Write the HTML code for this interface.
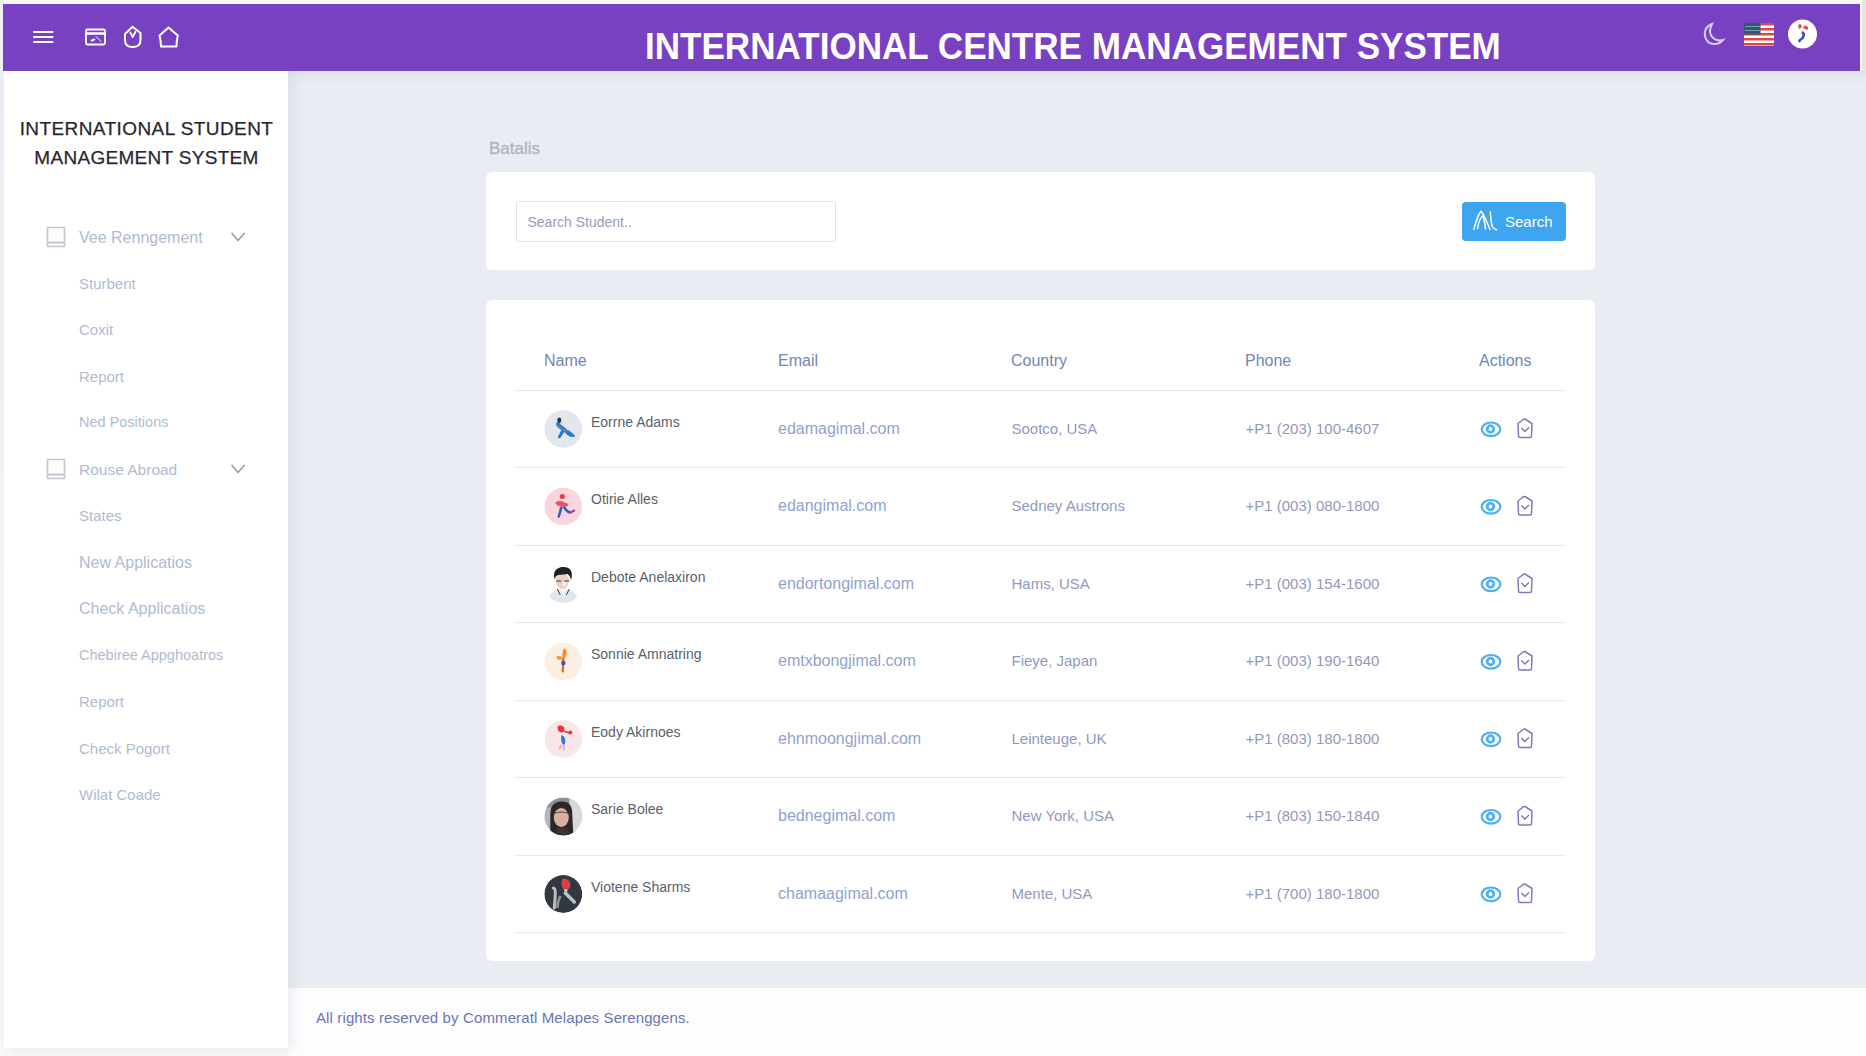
<!DOCTYPE html>
<html><head><meta charset="utf-8">
<style>
*{margin:0;padding:0;box-sizing:border-box}
html,body{width:1866px;height:1056px;overflow:hidden}
body{position:relative;background:#e9edf3;font-family:"Liberation Sans",sans-serif}
.abs{position:absolute}
#topstrip{left:0;top:0;width:1866px;height:4px;background:#f7f8fb}
#leftstrip{left:0;top:0;width:4px;height:1056px;background:linear-gradient(180deg,#eceff5 0,#eff1f6 300px,#f6f7fa 600px,#f8f9fb 100%)}
#rightstrip{left:1860px;top:0;width:6px;height:72px;background:linear-gradient(90deg,#fafbfc 0,#fafbfc 2px,#e3e6ea 2px)}
#header{left:3px;top:4px;width:1857px;height:67px;background:#7841c2}
#title{left:645px;top:27px;font-weight:bold;font-size:36px;line-height:40px;color:#fff;white-space:nowrap;transform-origin:0 0;transform:scaleX(0.974)}
#sidebar{left:4px;top:71px;width:284px;height:977px;background:#fff;box-shadow:4px 2px 12px rgba(130,140,160,0.16)}
#main{left:288px;top:71px;width:1578px;height:917px;background:linear-gradient(180deg,#dde1e7 0,#e4e8ee 5px,#e9edf3 14px,#e9edf3 100%)}
#footer{left:288px;top:988px;width:1578px;height:68px;background:#fdfdfe}
.sbt{left:0;width:293px;text-align:center;font-size:19px;line-height:22px;color:#2a2630;white-space:nowrap;-webkit-text-stroke:0.25px #2a2630}
.mi{left:79px;line-height:17px;color:#afbbd0;white-space:nowrap}
.card{background:#fff;border-radius:6px}
.th{font-size:16px;line-height:18px;color:#6f87b5;white-space:nowrap}
.nm{font-size:14px;line-height:16px;color:#5a5f6c;white-space:nowrap}
.em{font-size:16px;line-height:18px;color:#90a2cf;white-space:nowrap}
.co{font-size:15px;line-height:18px;color:#8f99c2;white-space:nowrap}
.ph{font-size:15px;line-height:18px;color:#9497bb;white-space:nowrap}
.hr{left:514px;width:1052px;height:1px;background:#e6e9ef}
svg{position:absolute;overflow:visible}
</style></head><body>
<div id="topstrip" class="abs"></div>
<div id="leftstrip" class="abs"></div>
<div id="rightstrip" class="abs"></div>
<div id="header" class="abs"></div>
<div id="title" class="abs">INTERNATIONAL CENTRE MANAGEMENT SYSTEM</div>
<svg style="left:0;top:0" width="1" height="1">
<g stroke="#fff" stroke-width="2" fill="none" stroke-linecap="round" stroke-linejoin="round">
<path d="M34,32 H52.5 M34,37 H52.5 M34,42 H52.5"/>
<rect x="86" y="29.5" width="19" height="15" rx="1.5" stroke-width="1.8"/>
<path d="M87,33.5 H104" stroke-width="2.5"/>
<path d="M96,36.5 L101,41.5" stroke-width="1"/>
</g>
<ellipse cx="93" cy="40" rx="2.5" ry="1.2" transform="rotate(-25 93 40)" fill="#fff"/>
<g stroke="#fff" stroke-width="2" fill="none" stroke-linecap="round" stroke-linejoin="round">
<path d="M125,34 L132.5,26.8 L140.5,33 L140.5,40 C140.5,45 137,47 132.5,47 C128,47 125,45 125,40 Z"/>
<path d="M130.3,32.5 L132.7,37 L135.5,31.8" stroke-width="1.8"/>
<path d="M168.5,27.5 L177.8,35.5 Q176.5,41 176.5,46.5 L161,46.5 Q161,41 159.5,35.5 Z"/>
</g>
<path d="M1712,24 C1706,26 1703,32 1706,39 C1709,45 1718,46 1723,40 C1716,42 1710,37 1710,31 C1710,28 1711,26 1712,24 Z" fill="none" stroke="#d9cdef" stroke-width="2"/>
<g>
<rect x="1744" y="23" width="30" height="23" fill="#fff"/>
<rect x="1744" y="23" width="30" height="2.5" fill="#e04848"/>
<rect x="1744" y="28" width="30" height="2.5" fill="#e04848"/>
<rect x="1744" y="33" width="30" height="2.5" fill="#e04848"/>
<rect x="1744" y="38" width="30" height="2.5" fill="#e04848"/>
<rect x="1744" y="43" width="30" height="2.5" fill="#e04848"/>
<rect x="1744" y="23" width="16.5" height="11.5" fill="#2f5b72"/>
<path d="M1745,26.5 H1760 M1745,30.5 H1760" stroke="#8fb0bd" stroke-width="0.8"/>
</g>
<circle cx="1802.5" cy="34" r="14.5" fill="#fff"/>
<path d="M1798,25 C1800,23 1803,25 1801,28 L1799,29 Z M1804,26 C1807,25 1810,28 1807,30 L1803,28 Z" fill="#e84a4a"/>
<path d="M1802,32 C1805,34 1804,38 1800,40 L1799,42" stroke="#2f50b8" stroke-width="2.5" fill="none"/>
</svg>
<div id="main" class="abs"></div>
<div class="abs" style="left:0;top:1047px;width:288px;height:9px;background:#f8f9fb"></div>
<div id="footer" class="abs"></div>
<div id="sidebar" class="abs"></div>
<div class="abs sbt" style="top:118px;letter-spacing:0.42px">INTERNATIONAL STUDENT</div>
<div class="abs sbt" style="top:147px;letter-spacing:0.3px">MANAGEMENT SYSTEM</div>
<div class="abs mi" style="top:229px;font-size:16px">Vee Renngement</div>
<div class="abs mi" style="top:275px;font-size:15px">Sturbent</div>
<div class="abs mi" style="top:321px;font-size:15px">Coxit</div>
<div class="abs mi" style="top:368px;font-size:15px">Report</div>
<div class="abs mi" style="top:414px;font-size:14.5px">Ned Positions</div>
<div class="abs mi" style="top:461px;font-size:15.5px">Rouse Abroad</div>
<div class="abs mi" style="top:507px;font-size:15px">States</div>
<div class="abs mi" style="top:554px;font-size:16px">New Applicatios</div>
<div class="abs mi" style="top:600px;font-size:16px">Check Applicatios</div>
<div class="abs mi" style="top:647px;font-size:14.5px">Chebiree Appghoatros</div>
<div class="abs mi" style="top:693px;font-size:15px">Report</div>
<div class="abs mi" style="top:740px;font-size:15px">Check Pogort</div>
<div class="abs mi" style="top:786px;font-size:15px">Wilat Coade</div>
<svg style="left:0;top:0" width="1" height="1"><rect x="47.5" y="227.5" width="17" height="19" rx="1" fill="none" stroke="#c0c6d0" stroke-width="1.7"/><path d="M48,242.5 H64" stroke="#c0c6d0" stroke-width="2"/><path d="M231.5,233 L238,240.5 L244.5,233" fill="none" stroke="#97a0b0" stroke-width="1.7"/><rect x="47.5" y="459.5" width="17" height="19" rx="1" fill="none" stroke="#c0c6d0" stroke-width="1.7"/><path d="M48,474.5 H64" stroke="#c0c6d0" stroke-width="2"/><path d="M231.5,465 L238,472.5 L244.5,465" fill="none" stroke="#97a0b0" stroke-width="1.7"/></svg>
<div class="abs" style="left:489px;top:139px;font-size:17px;line-height:19px;color:#aeb2bc;-webkit-text-stroke:0.3px #aeb2bc">Batalis</div>
<div class="abs card" style="left:486px;top:172px;width:1109px;height:98px"></div>
<div class="abs" style="left:515.5px;top:201px;width:320.5px;height:40.5px;border:1px solid #e1e4ea;border-radius:2px;background:#fff"></div>
<div class="abs" style="left:527.5px;top:214px;font-size:14px;line-height:17px;color:#9c9ab8">Search Student..</div>
<div class="abs" style="left:1462px;top:202px;width:103.5px;height:38.5px;background:#3ea6f1;border-radius:4px"></div>
<svg style="left:0;top:0" width="1" height="1"><path d="M1473.8,229.5 C1476,222 1478,213.5 1481,211.3 C1483.5,213.5 1487,222 1490,229.5 M1477.5,228.5 C1478.5,223 1480.5,217.5 1482.5,216 C1484,218.5 1485,224 1485.5,229 M1490.3,212 C1490.8,219 1491.3,224 1492.3,226.5 C1493.3,228.5 1494.8,229.5 1496.5,229.8" fill="none" stroke="#fff" stroke-width="1.5" stroke-linecap="round"/></svg>
<div class="abs" style="left:1505px;top:213px;font-size:15px;line-height:17px;color:#fff">Search</div>
<div class="abs card" style="left:486px;top:300px;width:1109px;height:661px"></div>
<div class="abs th" style="left:544px;top:351.5px">Name</div>
<div class="abs th" style="left:778px;top:351.5px">Email</div>
<div class="abs th" style="left:1011px;top:351.5px">Country</div>
<div class="abs th" style="left:1245px;top:351.5px">Phone</div>
<div class="abs th" style="left:1479px;top:351.5px">Actions</div>
<div class="abs hr" style="top:389.5px"></div>
<div class="abs nm" style="left:591px;top:413.5px">Eorrne Adams</div>
<div class="abs em" style="left:778px;top:419.5px">edamagimal.com</div>
<div class="abs co" style="left:1011.5px;top:419.5px">Sootco, USA</div>
<div class="abs ph" style="left:1245.5px;top:419.5px">+P1 (203) 100-4607</div>
<div class="abs hr" style="top:467.0px"></div>
<div class="abs nm" style="left:591px;top:491.0px">Otirie Alles</div>
<div class="abs em" style="left:778px;top:497.0px">edangimal.com</div>
<div class="abs co" style="left:1011.5px;top:497.0px">Sedney Austrons</div>
<div class="abs ph" style="left:1245.5px;top:497.0px">+P1 (003) 080-1800</div>
<div class="abs hr" style="top:544.5px"></div>
<div class="abs nm" style="left:591px;top:568.5px">Debote Anelaxiron</div>
<div class="abs em" style="left:778px;top:574.5px">endortongimal.com</div>
<div class="abs co" style="left:1011.5px;top:574.5px">Hams, USA</div>
<div class="abs ph" style="left:1245.5px;top:574.5px">+P1 (003) 154-1600</div>
<div class="abs hr" style="top:622.0px"></div>
<div class="abs nm" style="left:591px;top:646.0px">Sonnie Amnatring</div>
<div class="abs em" style="left:778px;top:652.0px">emtxbongjimal.com</div>
<div class="abs co" style="left:1011.5px;top:652.0px">Fieye, Japan</div>
<div class="abs ph" style="left:1245.5px;top:652.0px">+P1 (003) 190-1640</div>
<div class="abs hr" style="top:699.5px"></div>
<div class="abs nm" style="left:591px;top:723.5px">Eody Akirnoes</div>
<div class="abs em" style="left:778px;top:729.5px">ehnmoongjimal.com</div>
<div class="abs co" style="left:1011.5px;top:729.5px">Leinteuge, UK</div>
<div class="abs ph" style="left:1245.5px;top:729.5px">+P1 (803) 180-1800</div>
<div class="abs hr" style="top:777.0px"></div>
<div class="abs nm" style="left:591px;top:801.0px">Sarie Bolee</div>
<div class="abs em" style="left:778px;top:807.0px">bednegimal.com</div>
<div class="abs co" style="left:1011.5px;top:807.0px">New York, USA</div>
<div class="abs ph" style="left:1245.5px;top:807.0px">+P1 (803) 150-1840</div>
<div class="abs hr" style="top:854.5px"></div>
<div class="abs nm" style="left:591px;top:878.5px">Viotene Sharms</div>
<div class="abs em" style="left:778px;top:884.5px">chamaagimal.com</div>
<div class="abs co" style="left:1011.5px;top:884.5px">Mente, USA</div>
<div class="abs ph" style="left:1245.5px;top:884.5px">+P1 (700) 180-1800</div>
<div class="abs hr" style="top:932.0px"></div>
<svg style="left:0;top:0" width="1" height="1"><g transform="translate(563.3,429.0)"><clipPath id="c0"><circle r="19"/></clipPath><g clip-path="url(#c0)"><circle r="19" fill="#e2e7ed"/><path d="M-7,-6 C-5,-9 -2,-7 1,-3 L5,1 C8,3 10,5 12,7 C10,9 6,8 3,5 L1,3 L-3,9 C-4,10 -6,9 -5,7 L-2,1 C-5,-1 -8,-3 -7,-6 Z" fill="#2f78c4"/><path d="M-6,-4 C-4,-1 -1,1 2,2" stroke="#5aa0e0" stroke-width="1" fill="none"/><ellipse cx="-4" cy="-9" rx="2" ry="2.5" fill="#2b2f3a"/><path d="M-3,-6 L2,-2 C4,-1 5,0 4,1" stroke="#e9d8cf" stroke-width="2" fill="none"/></g></g><ellipse cx="1491" cy="429.3" rx="9.3" ry="6.8" fill="none" stroke="#4fb0ef" stroke-width="2.2"/><circle cx="1490.5" cy="429.0" r="3.3" fill="none" stroke="#4fb0ef" stroke-width="2.8"/><path d="M1518,423.5 L1522.5,420.0 C1523.5,418.5 1525.5,418.5 1526.5,420.0 L1532,423.5 L1531.5,436.0 C1531.5,437.3 1531,437.5 1530,437.5 L1520,437.5 C1519,437.5 1518.5,437.0 1518.5,436.0 Z" fill="none" stroke="#8079bd" stroke-width="1.5" stroke-linejoin="round"/><path d="M1521.5,428.0 L1524.8,431.5 L1529,427.5" fill="none" stroke="#7a74b0" stroke-width="1.4"/><g transform="translate(563.3,506.5)"><clipPath id="c1"><circle r="19"/></clipPath><g clip-path="url(#c1)"><circle r="19" fill="#f9d5de"/><circle cx="-1" cy="-10" r="2.6" fill="#e0424e"/><path d="M-8,-3 C-7,-6 -2,-6 1,-4 C3,-4 5,-3 5,-1 C3,1 -5,1 -8,-3 Z" fill="#e5566a"/><path d="M-2,1 L-4.5,10 M1,1 C3,4 4,6 7,6" stroke="#3a5ec0" stroke-width="2.6" fill="none" stroke-linecap="round"/><path d="M7,6 L11,4" stroke="#b04090" stroke-width="2" stroke-linecap="round"/></g></g><ellipse cx="1491" cy="506.8" rx="9.3" ry="6.8" fill="none" stroke="#4fb0ef" stroke-width="2.2"/><circle cx="1490.5" cy="506.5" r="3.3" fill="none" stroke="#4fb0ef" stroke-width="2.8"/><path d="M1518,501.0 L1522.5,497.5 C1523.5,496.0 1525.5,496.0 1526.5,497.5 L1532,501.0 L1531.5,513.5 C1531.5,514.8 1531,515.0 1530,515.0 L1520,515.0 C1519,515.0 1518.5,514.5 1518.5,513.5 Z" fill="none" stroke="#8079bd" stroke-width="1.5" stroke-linejoin="round"/><path d="M1521.5,505.5 L1524.8,509.0 L1529,505.0" fill="none" stroke="#7a74b0" stroke-width="1.4"/><g transform="translate(563.3,584.0)"><clipPath id="c2"><circle r="19"/></clipPath><g clip-path="url(#c2)"><circle r="19" fill="#ffffff"/><path d="M-15,19 C-15,8 -8,5 0,5 C8,5 14,8 15,19 Z" fill="#dfe6ee"/><path d="M-4,5 L0,11 L4,5 Z" fill="#f6f8fa"/><path d="M-6,5 L-3,11 M6,5 L3,11" stroke="#3a3f48" stroke-width="1"/><ellipse cx="-1" cy="-3" rx="6.5" ry="8" fill="#ecd0c4"/><path d="M-9,-5 C-11,-15 -4,-17 0,-17 C7,-17 10,-13 8,-4 C7,-7 6,-9 4,-10 C0,-9 -5,-10 -7,-8 C-8,-7 -8,-6 -9,-5 Z" fill="#1d2024"/><path d="M-7,-3 H-2 M1,-3 H6" stroke="#3a3a3a" stroke-width="1.2"/><circle cx="1" cy="0" r="2" fill="#fff" opacity="0.7"/></g></g><ellipse cx="1491" cy="584.3" rx="9.3" ry="6.8" fill="none" stroke="#4fb0ef" stroke-width="2.2"/><circle cx="1490.5" cy="584.0" r="3.3" fill="none" stroke="#4fb0ef" stroke-width="2.8"/><path d="M1518,578.5 L1522.5,575.0 C1523.5,573.5 1525.5,573.5 1526.5,575.0 L1532,578.5 L1531.5,591.0 C1531.5,592.3 1531,592.5 1530,592.5 L1520,592.5 C1519,592.5 1518.5,592.0 1518.5,591.0 Z" fill="none" stroke="#8079bd" stroke-width="1.5" stroke-linejoin="round"/><path d="M1521.5,583.0 L1524.8,586.5 L1529,582.5" fill="none" stroke="#7a74b0" stroke-width="1.4"/><g transform="translate(563.3,661.5)"><clipPath id="c3"><circle r="19"/></clipPath><g clip-path="url(#c3)"><circle r="19" fill="#fbefe2"/><path d="M1,-13 C4,-13 4,-6 1,-2 L-1,-2 C-1,-6 -1,-12 1,-13 Z" fill="#f0903c"/><path d="M-7,-4 C-6,-7 -2,-6 0,-3 C-2,-1 -6,-1 -7,-4 Z" fill="#f29a48"/><path d="M0,-2 L-0.5,10" stroke="#e06a2a" stroke-width="2.2" stroke-linecap="round"/><circle cx="0" cy="1.5" r="2.2" fill="#3a52b0"/></g></g><ellipse cx="1491" cy="661.8" rx="9.3" ry="6.8" fill="none" stroke="#4fb0ef" stroke-width="2.2"/><circle cx="1490.5" cy="661.5" r="3.3" fill="none" stroke="#4fb0ef" stroke-width="2.8"/><path d="M1518,656.0 L1522.5,652.5 C1523.5,651.0 1525.5,651.0 1526.5,652.5 L1532,656.0 L1531.5,668.5 C1531.5,669.8 1531,670.0 1530,670.0 L1520,670.0 C1519,670.0 1518.5,669.5 1518.5,668.5 Z" fill="none" stroke="#8079bd" stroke-width="1.5" stroke-linejoin="round"/><path d="M1521.5,660.5 L1524.8,664.0 L1529,660.0" fill="none" stroke="#7a74b0" stroke-width="1.4"/><g transform="translate(563.3,739.0)"><clipPath id="c4"><circle r="19"/></clipPath><g clip-path="url(#c4)"><circle r="19" fill="#f9e7e8"/><path d="M-6,-12 C-3,-15 2,-13 1,-9 C0,-6 -3,-6 -5,-8 Z" fill="#e2383e"/><path d="M0,-8 L6,-6" stroke="#e2383e" stroke-width="1.5"/><circle cx="7" cy="-6.5" r="2" fill="#e2383e"/><path d="M-2,-4 C2,-3 3,2 1,6 C-1,6 -3,2 -2,-4 Z" fill="#3478d8"/><path d="M-2,6 L-4,10 M0,6 L1,11" stroke="#f2a8b4" stroke-width="1.8" fill="none"/></g></g><ellipse cx="1491" cy="739.3" rx="9.3" ry="6.8" fill="none" stroke="#4fb0ef" stroke-width="2.2"/><circle cx="1490.5" cy="739.0" r="3.3" fill="none" stroke="#4fb0ef" stroke-width="2.8"/><path d="M1518,733.5 L1522.5,730.0 C1523.5,728.5 1525.5,728.5 1526.5,730.0 L1532,733.5 L1531.5,746.0 C1531.5,747.3 1531,747.5 1530,747.5 L1520,747.5 C1519,747.5 1518.5,747.0 1518.5,746.0 Z" fill="none" stroke="#8079bd" stroke-width="1.5" stroke-linejoin="round"/><path d="M1521.5,738.0 L1524.8,741.5 L1529,737.5" fill="none" stroke="#7a74b0" stroke-width="1.4"/><g transform="translate(563.3,816.5)"><clipPath id="c5"><circle r="19"/></clipPath><g clip-path="url(#c5)"><circle r="19" fill="#b4b8bc"/><rect x="-19" y="-19" width="38" height="10" fill="#8e9296"/><path d="M6,-19 L19,-19 L19,19 L6,19 Z" fill="#d6d9dc"/><path d="M-13,19 L-13,-2 C-13,-13 -7,-15 -1,-15 C6,-15 9,-11 9,-2 L10,19 Z" fill="#2c2828"/><ellipse cx="-2" cy="1" rx="7.5" ry="9.5" fill="#d9af9f"/><path d="M-9,-3 C-5,-5 2,-5 5,-3" stroke="#4a3c3a" stroke-width="1.2" fill="none"/><path d="M-19,6 L-12,19 L-19,19 Z M19,4 L9,19 L19,19 Z" fill="#f2f2f2"/><path d="M-9,19 C-7,13 -5,11 -2,11 C2,11 5,13 7,19 Z" fill="#3a3434"/></g></g><ellipse cx="1491" cy="816.8" rx="9.3" ry="6.8" fill="none" stroke="#4fb0ef" stroke-width="2.2"/><circle cx="1490.5" cy="816.5" r="3.3" fill="none" stroke="#4fb0ef" stroke-width="2.8"/><path d="M1518,811.0 L1522.5,807.5 C1523.5,806.0 1525.5,806.0 1526.5,807.5 L1532,811.0 L1531.5,823.5 C1531.5,824.8 1531,825.0 1530,825.0 L1520,825.0 C1519,825.0 1518.5,824.5 1518.5,823.5 Z" fill="none" stroke="#8079bd" stroke-width="1.5" stroke-linejoin="round"/><path d="M1521.5,815.5 L1524.8,819.0 L1529,815.0" fill="none" stroke="#7a74b0" stroke-width="1.4"/><g transform="translate(563.3,894.0)"><clipPath id="c6"><circle r="19"/></clipPath><g clip-path="url(#c6)"><circle r="19" fill="#323840"/><path d="M-1,-15 C3,-16 7,-14 7,-9 C7,-5 4,-3 1,-4 C-2,-6 -2,-12 -1,-15 Z" fill="#d84148"/><path d="M1,-4 L4,-3" stroke="#f0d8c8" stroke-width="2"/><path d="M2,-1 L11,8" stroke="#b5c2cc" stroke-width="3.5" stroke-linecap="round"/><path d="M-10,-6 C-7,-6 -8,2 -9,14" stroke="#b8bec4" stroke-width="3" fill="none" stroke-linecap="round"/><path d="M-3,2 C-5,6 -6,10 -6,14" stroke="#8f969c" stroke-width="2.5" fill="none"/></g></g><ellipse cx="1491" cy="894.3" rx="9.3" ry="6.8" fill="none" stroke="#4fb0ef" stroke-width="2.2"/><circle cx="1490.5" cy="894.0" r="3.3" fill="none" stroke="#4fb0ef" stroke-width="2.8"/><path d="M1518,888.5 L1522.5,885.0 C1523.5,883.5 1525.5,883.5 1526.5,885.0 L1532,888.5 L1531.5,901.0 C1531.5,902.3 1531,902.5 1530,902.5 L1520,902.5 C1519,902.5 1518.5,902.0 1518.5,901.0 Z" fill="none" stroke="#8079bd" stroke-width="1.5" stroke-linejoin="round"/><path d="M1521.5,893.0 L1524.8,896.5 L1529,892.5" fill="none" stroke="#7a74b0" stroke-width="1.4"/></svg>
<div class="abs" style="left:316px;top:1009px;font-size:15px;line-height:18px;letter-spacing:0.12px;color:#6c74b4;white-space:nowrap">All rights reserved by Commeratl Melapes Serenggens.</div>
</body></html>
